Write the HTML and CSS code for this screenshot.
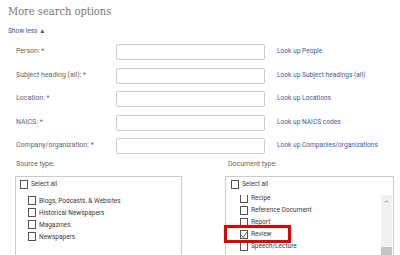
FILE: index.html
```html
<!DOCTYPE html>
<html lang="en">
<head>
    <meta charset="UTF-8">
    <title>More search options</title>
    <link rel="stylesheet" href="styles.css">
</head>
<body>

<div class="page">
    <h2 class="title">More search options</h2>
    <a class="toggle" href="#">Show less &#9650;</a>

    <div class="fields">
        <label class="field-label">Person: *</label>
        <input class="field-input" type="text">
        <a class="lookup" href="#">Look up People</a>

        <label class="field-label">Subject heading (all): *</label>
        <input class="field-input" type="text">
        <a class="lookup" href="#">Look up Subject headings (all)</a>

        <label class="field-label">Location: *</label>
        <input class="field-input" type="text">
        <a class="lookup" href="#">Look up Locations</a>

        <label class="field-label">NAICS: *</label>
        <input class="field-input" type="text">
        <a class="lookup" href="#">Look up NAICS codes</a>

        <label class="field-label">Company/organization: *</label>
        <input class="field-input" type="text">
        <a class="lookup" href="#">Look up Companies/organizations</a>
    </div>

    <div class="types">
        <div class="type-col">
            <div class="type-label source-label">Source type:</div>
            <div class="type-box source-box">
                <div class="check-row"><span class="box"></span>Select all</div>
                <div class="sub-list">
                    <div class="check-row"><span class="box"></span>Blogs, Podcasts, &amp; Websites</div>
                    <div class="check-row"><span class="box"></span>Historical Newspapers</div>
                    <div class="check-row"><span class="box"></span>Magazines</div>
                    <div class="check-row"><span class="box"></span>Newspapers</div>
                </div>
            </div>
        </div>

        <div class="type-col">
            <div class="type-label doc-label">Document type:</div>
            <div class="type-box doc-box">
                <div class="check-row"><span class="box"></span>Select all</div>
                <div class="scroll-area">
                    <div class="scroll-list">
                        <div class="check-row"><span class="box"></span>Recipe</div>
                        <div class="check-row"><span class="box"></span>Reference Document</div>
                        <div class="check-row"><span class="box"></span>Report</div>
                        <div class="check-row"><span class="box checked"><svg width="8" height="8" viewBox="0 0 8 8"><polyline points="1,4 3,6.5 7,1" fill="none" stroke="#555" stroke-width="0.9"/></svg></span>Review</div>
                        <div class="check-row"><span class="box"></span>Speech/Lecture</div>
                    </div>
                    <div class="scrollbar">
                        <svg class="arrow" width="7" height="5" viewBox="0 0 7 5"><polyline points="1,4 3.5,1.5 6,4" fill="none" stroke="#555" stroke-width="1.2"/></svg>
                        <div class="thumb"></div>
                    </div>
                </div>
                <div class="highlight"></div>
            </div>
        </div>
    </div>
</div>

</body>
</html>
```

FILE: styles.css
```css
*{
    margin: 0;
    padding: 0;
    box-sizing: border-box;
}
body{
    width: 400px;
    height: 255px;
    overflow: hidden;
    background: #fff;
    font-family: Roboto, "Liberation Sans", sans-serif;
}
.page{
    display: flex;
    flex-direction: column;
    align-items: flex-start;
}
.title{
    margin: 4px 0 0 8px;
    font-family: "DejaVu Serif", "Liberation Serif", serif;
    font-stretch: condensed;
    font-weight: normal;
    font-size: 11px;
    line-height: 16px;
    color: #777;
}
.toggle{
    margin: 6px 0 0 8px;
    font-size: 6.5px;
    line-height: 10px;
    color: #2f57a4;
    text-decoration: none;
}
.fields{
    display: grid;
    grid-template-columns: 88px 149px auto;
    column-gap: 12px;
    row-gap: 7.5px;
    align-items: center;
    margin-top: 8px;
    padding-left: 16px;
}
.field-label{
    font-size: 7px;
    color: #666;
    margin-top: -2px;
    white-space: nowrap;
}
.field-input{
    height: 16px;
    border: 1px solid #ccc;
    border-radius: 2px;
    background: #fff;
}
.lookup{
    font-size: 6.6px;
    color: #3a5ca6;
    text-decoration: none;
    margin-top: -2px;
}
.types{
    display: grid;
    grid-template-columns: 167px 169px;
    column-gap: 43px;
    margin-top: 5px;
    padding-left: 15px;
}
.type-label{
    font-size: 7px;
    line-height: 10px;
    color: #666;
}
.source-label{
    padding-left: 1px;
}
.doc-label{
    padding-left: 3px;
}
.type-box{
    margin-top: 7px;
    height: 100px;
    border: 1px solid #ccc;
    padding-top: 1px;
}
.source-box{
    padding-left: 4px;
}
.doc-box{
    position: relative;
    padding-left: 5px;
}
.check-row{
    display: flex;
    align-items: center;
    gap: 3px;
    height: 12px;
    font-size: 6.5px;
    color: #3a3a3a;
}
.box{
    display: inline-block;
    width: 8px;
    height: 9px;
    border: 1px solid #555;
    background: #fff;
    flex-shrink: 0;
}
.box svg{
    display: block;
    margin: 0 0 0 -1px;
}
.sub-list{
    margin-top: 4.5px;
    padding-left: 8px;
}
.scroll-area{
    display: flex;
    margin-top: 5px;
    height: 70px;
    overflow: hidden;
}
.scroll-list{
    flex: 1;
    margin-top: -3px;
    padding-left: 9px;
}
.scrollbar{
    width: 11px;
    margin-right: 1px;
    background: #f1f1f1;
    display: flex;
    flex-direction: column;
    align-items: center;
}
.arrow{
    margin-top: 5px;
}
.thumb{
    width: 11px;
    height: 30px;
    margin-top: 44px;
    background: #c6c6c6;
}
.highlight{
    position: absolute;
    top: 48px;
    left: -2px;
    width: 67px;
    height: 18px;
    border: 3px solid #e00000;
}
```
